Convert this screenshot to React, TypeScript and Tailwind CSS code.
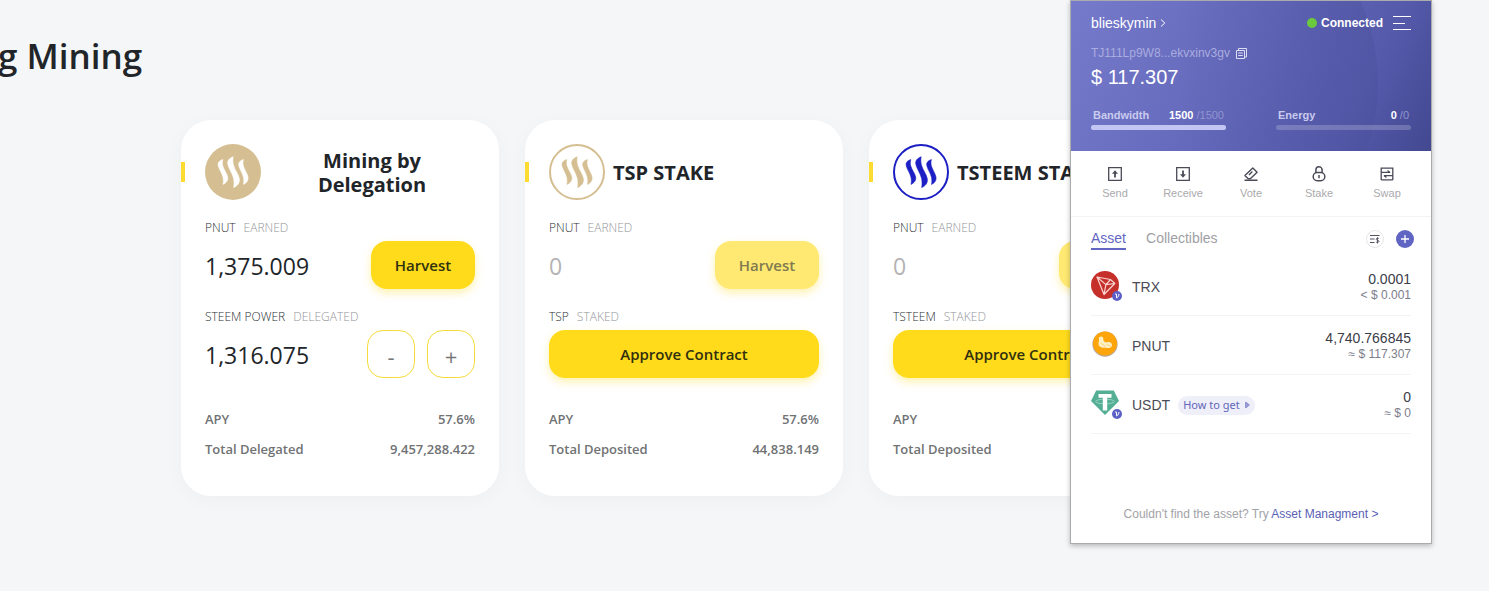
import type { ReactNode } from "react";
import { clsx } from "clsx";

const cards = [
  {
    title: "Mining by\nDelegation",
    logo: "solid",
    earned: "1,375.009",
    token: "STEEM POWER",
    action: "DELEGATED",
    amount: "1,316.075",
    apy: "57.6%",
    totalLabel: "Total Delegated",
    total: "9,457,288.422",
  },
  {
    title: "TSP STAKE",
    logo: "gold",
    earned: "0",
    token: "TSP",
    action: "STAKED",
    apy: "57.6%",
    totalLabel: "Total Deposited",
    total: "44,838.149",
  },
  {
    title: "TSTEEM STAKE",
    logo: "blue",
    earned: "0",
    token: "TSTEEM",
    action: "STAKED",
    apy: "57.6%",
    totalLabel: "Total Deposited",
    total: "12,204.518",
  },
];

const SteemLogo = ({ variant }: { variant: string }) => {
  const color = variant === "blue" ? "#1b1fc4" : "#d5bf92";
  const solid = variant === "solid";
  const wave = solid ? "#fff" : color;

  return (
    <svg className="h-14 w-14 shrink-0" viewBox="0 0 56 56" aria-hidden="true">
      <circle cx="28" cy="28" r={solid ? 28 : 27} fill={solid ? color : "#fff"} stroke={solid ? "none" : color} strokeWidth="2" />
      <g fill={wave} stroke={wave} strokeWidth=".6">
        <path d="M17.8 15.6C14.6 16.6 12.6 18.4 13.2 21.6C13.9 25.2 17 29 18 33.4C18.5 36 18.5 38.2 18 40.4C21.2 38.8 23.2 36.6 22.7 33.2C22.1 29.4 18.9 26.2 17.7 21.8C17.2 19.6 17.2 17.6 17.8 15.6Z" />
        <path d="M28.2 12.8C24.6 14.2 22.2 16.4 22.8 20C23.5 24.4 27.4 29 28.6 34.6C29.2 37.8 29.2 40.8 28.7 43.6C32.6 41.8 34.9 39 34.3 34.8C33.6 30.2 29.7 26.2 28.3 20.6C27.7 17.8 27.7 15.2 28.2 12.8Z" />
        <path d="M38.4 15.6C35.2 16.6 33.2 18.4 33.8 21.6C34.5 25.2 37.6 29 38.5 33.4C39 36 39 38.2 38.5 40.4C41.7 38.8 43.5 36.6 43 33.2C42.4 29.4 39.5 26.2 38.3 21.8C37.8 19.6 37.8 17.6 38.4 15.6Z" />
      </g>
    </svg>
  );
};

const Label = ({ name, note }: { name: string; note: string }) => (
  <p className="mt-[19px] mb-1 flex gap-2 text-[12px] leading-[18px] font-light text-[#2c3034]">
    <span>{name}</span>
    <span className="text-[#94969a]">{note}</span>
  </p>
);

const StepButton = ({ children, label }: { children: ReactNode; label: string }) => (
  <button aria-label={label} className="h-12 w-12 rounded-2xl border border-[#f5dc3c] pt-1 text-[22px] leading-6 text-[#777]">
    {children}
  </button>
);

const MiningCard = ({ card }: { card: (typeof cards)[number] }) => {
  const empty = card.earned === "0";

  return (
    <article className="flex-1 rounded-[30px] bg-white px-6 pt-6 pb-8 shadow-[0_4px_20px_rgba(0,0,0,0.03)]">
      <header className="-ml-6 flex items-center">
        <span className="mr-5 h-5 w-1 shrink-0 bg-[#fadc32]" />
        <SteemLogo variant={card.logo} />
        <h2
          className={clsx(
            "ml-2 pt-0.5 whitespace-pre text-[20px] leading-6 font-bold text-[#212529]",
            card.logo === "solid" && "flex-1 text-center"
          )}
        >
          {card.title}
        </h2>
      </header>

      <Label name="PNUT" note="EARNED" />
      <div className="flex h-12 items-center justify-between">
        <span className={clsx("pt-0.5 text-[23px]", empty ? "text-[#b3b3b3]" : "text-[#212529]")}>{card.earned}</span>
        <button
          disabled={empty}
          className="h-12 w-[104px] rounded-2xl bg-[#ffdb1c] text-[15px] font-semibold text-[#30300f] shadow-[0_4px_8px_rgba(255,219,28,0.35)] disabled:bg-[#ffe972] disabled:text-[#7f7a50]"
        >
          Harvest
        </button>
      </div>

      <Label name={card.token} note={card.action} />
      {card.amount ? (
        <div className="flex h-12 items-center gap-3">
          <span className="flex-1 pt-0.5 text-[23px] text-[#212529]">{card.amount}</span>
          <StepButton label="Decrease delegation">-</StepButton>
          <StepButton label="Increase delegation">+</StepButton>
        </div>
      ) : (
        <button className="h-12 w-full rounded-2xl bg-[#ffdb1c] text-[15px] font-semibold text-[#30300f] shadow-[0_4px_8px_rgba(255,219,28,0.35)]">
          Approve Contract
        </button>
      )}

      <dl className="mt-[26px] text-[13px] leading-[30px] font-semibold text-[#707274]">
        <div className="flex justify-between">
          <dt>APY</dt>
          <dd>{card.apy}</dd>
        </div>
        <div className="flex justify-between">
          <dt>{card.totalLabel}</dt>
          <dd>{card.total}</dd>
        </div>
      </dl>
    </article>
  );
};

const icon = "h-4 w-4";

const actions = [
  {
    name: "Send",
    svg: (
      <svg className={icon} viewBox="0 0 16 16" fill="none" stroke="#4a4b57" strokeWidth="1.3">
        <path d="M1.7 1.7h12.6v12.6H1.7z" />
        <path d="M8 11.5V6" strokeWidth="1.8" />
        <path d="M5 7.8L8 4.2l3 3.6z" fill="#4a4b57" stroke="none" />
      </svg>
    ),
  },
  {
    name: "Receive",
    svg: (
      <svg className={icon} viewBox="0 0 16 16" fill="none" stroke="#4a4b57" strokeWidth="1.3">
        <path d="M1.7 1.7h12.6v12.6H1.7z" />
        <path d="M8 4.5V10" strokeWidth="1.8" />
        <path d="M5 8.2L8 11.8l3-3.6z" fill="#4a4b57" stroke="none" />
      </svg>
    ),
  },
  {
    name: "Vote",
    svg: (
      <svg className={icon} viewBox="0 0 16 16" fill="none" stroke="#4a4b57" strokeWidth="1.4" strokeLinejoin="round">
        <path d="M9.8 1.9l4.3 4.3-6.8 6.5H5.2L1.9 9.4z" />
        <path d="M6 8.9l3.4-3.3M1.5 14.3h13" />
      </svg>
    ),
  },
  {
    name: "Stake",
    svg: (
      <svg className={icon} viewBox="0 0 16 16" fill="none" stroke="#4a4b57" strokeWidth="1.5">
        <path d="M4.9 6.7V3.9a3.1 3.1 0 0 1 6.2 0v2.8" />
        <rect x="2.2" y="6.5" width="11.6" height="8.2" rx="4" />
        <path d="M8 9v3.2" />
      </svg>
    ),
  },
  {
    name: "Swap",
    svg: (
      <svg className={icon} viewBox="0 0 16 16" fill="none" stroke="#4a4b57" strokeWidth="1.3">
        <path d="M2.2 14V2.2h11.6V14M2.2 13.8h11.6" />
        <path d="M2 6.4h9M5 9.7h9" />
        <path d="M8.6 3.8l3.2 2.6H8.6zM7.4 12.3L4.2 9.7h3.2z" fill="#4a4b57" stroke="none" />
      </svg>
    ),
  },
];

const Verified = () => (
  <svg className="absolute -right-[3px] -bottom-0.5 h-2.5 w-2.5" viewBox="0 0 10 10" aria-hidden="true">
    <circle cx="5" cy="5" r="5" fill="#5c60c6" />
    <path d="M3.1 3h1.3l.3 4M6.9 3c.2 1.6-.8 3-2.2 4" fill="none" stroke="#fff" strokeWidth="1" />
  </svg>
);

const assets = [
  {
    name: "TRX",
    amount: "0.0001",
    value: "< $ 0.001",
    verified: true,
    svg: (
      <svg className="h-7 w-7" viewBox="0 0 28 28" aria-hidden="true">
        <circle cx="14" cy="14" r="14" fill="#c5302b" />
        <path
          d="M6 6L19.5 8.5l4.3 4L13 23.5zM6 6l8.9 7.6L19.5 8.5M14.9 13.6l8.9-1.1M14.9 13.6L13 23.5"
          fill="none"
          stroke="#fbd5d0"
          strokeWidth="1.2"
          strokeLinejoin="round"
        />
      </svg>
    ),
  },
  {
    name: "PNUT",
    amount: "4,740.766845",
    value: "≈ $ 117.307",
    svg: (
      <svg className="h-7 w-7" viewBox="0 0 28 28" aria-hidden="true">
        <circle cx="14" cy="14.2" r="12.6" fill="#b9a89a" />
        <circle cx="14" cy="13.4" r="12" fill="#fda50a" />
        <path
          d="M8.5 7c1.7-1.3 3.8-.4 3.8 1.7 0 1.7.5 2.8 1.7 3.3 1.4.6 2.7-.5 4.4.1 2.9 1 3.6 4.2 1.2 5.4-2.1 1-4.8.3-7 .3-2.7 0-4.9-1.2-5.1-3.7-.1-1.8.7-2.4.5-4-.2-1.3-.3-2.3.5-3.1z"
          fill="#fff0c4"
        />
        <path d="M9.5 13l5 3.5M15.5 14.5l4 1.5" stroke="#f6c561" strokeWidth=".7" />
      </svg>
    ),
  },
  {
    name: "USDT",
    amount: "0",
    value: "≈ $ 0",
    verified: true,
    help: true,
    svg: (
      <svg className="h-7 w-7" viewBox="0 0 28 28" aria-hidden="true">
        <path d="M5.2 1.5h17.6L28 12 14 26 0 12z" fill="#53ae94" />
        <ellipse cx="14" cy="12.5" rx="9.3" ry="2.3" fill="none" stroke="#a9dccd" strokeWidth=".8" />
        <path d="M7.5 5h13v3.8h-4.3V21.5h-4.4V8.8H7.5z" fill="#fff" />
      </svg>
    ),
  },
];

const Resource = ({ name, used, limit, percent }: { name: string; used: number; limit: number; percent: number }) => (
  <div className="w-[135px]">
    <div className="flex justify-between px-0.5 text-[11px] leading-4 font-bold">
      <span className="text-[#c9cbee]">{name}</span>
      <span className="text-white">
        {used} <span className="font-normal text-[#9194cf]">/{limit}</span>
      </span>
    </div>
    <div className="mt-0.5 h-[5px] rounded-full bg-white/20">
      <div className="h-full rounded-full bg-[#c3c6f2]" style={{ width: `${percent}%` }} />
    </div>
  </div>
);

const Wallet = () => (
  <aside className="absolute top-0 right-[57px] w-[362px] border border-[#a9abad] bg-white font-['Liberation_Sans',Arial,sans-serif] shadow-[0_2px_5px_rgba(0,0,0,0.25)]">
    <section className="relative overflow-hidden bg-linear-[115deg,#757acb,#6267b9_50%,#555aab_78%,#434891] px-5 pt-3 pb-[21px] text-white">
      <span className="absolute -top-[118px] -left-[93px] h-[400px] w-[400px] rounded-full bg-linear-to-r from-transparent from-50% to-[#4b509c]/45" />
      <div className="relative">
        <div className="flex items-center leading-5">
          <button className="flex items-center gap-1 text-[14px]">
            blieskymin
            <svg className="h-2 w-1.5" viewBox="0 0 6 8" fill="none" stroke="#fff" strokeWidth="1">
              <path d="M1 .5L4.8 4 1 7.5" />
            </svg>
          </button>
          <span className="mr-1 ml-auto h-2.5 w-2.5 rounded-full bg-[#6bc93d]" />
          <span className="mr-2.5 text-[12px] font-bold">Connected</span>
          <button aria-label="Menu">
            <svg className="h-3.5 w-[18px]" viewBox="0 0 18 14" stroke="#fff" strokeWidth="1">
              <path d="M0 .5h18M0 7.5h12M0 13.5h18" />
            </svg>
          </button>
        </div>
        <div className="mt-3 flex items-center gap-1.5 text-[12px] leading-4 text-[#a9acdf]">
          TJ111Lp9W8...ekvxinv3gv
          <button aria-label="Copy address">
            <svg className="h-[11px] w-[11px]" viewBox="0 0 11 11" fill="none" stroke="#dcdef5">
              <path d="M2.5 2V.5h8V9H9M.5 2.5h8v8h-8zM2.2 5h4.6M2.2 7.5h4.6" />
            </svg>
          </button>
        </div>
        <p className="mt-1 text-[20px] leading-6">$ 117.307</p>
        <div className="mt-[18px] flex justify-between">
          <Resource name="Bandwidth" used={1500} limit={1500} percent={100} />
          <Resource name="Energy" used={0} limit={0} percent={0} />
        </div>
      </div>
    </section>

    <nav className="grid grid-cols-5 border-b border-[#f3f3f5] px-2.5 pt-[15px] pb-[15px] text-[11px] leading-4 text-[#aaaaad]">
      {actions.map((action) => (
        <button key={action.name} className="flex flex-col items-center gap-[3px]">
          {action.svg}
          {action.name}
        </button>
      ))}
    </nav>

    <div className="flex items-center pt-[11px] pr-[17px] pl-5 text-[14px] leading-5">
      <button className="border-b-2 border-[#6266c3] text-[#6266c3]">Asset</button>
      <button className="ml-5 border-b-2 border-transparent text-[#a0a0a4]">Collectibles</button>
      <button aria-label="Sort assets" className="ml-auto">
        <svg className="h-[18px] w-[18px]" viewBox="0 0 18 18" fill="none" stroke="#515260">
          <circle cx="9" cy="9" r="8.5" stroke="#e6e6e9" />
          <path d="M4 5.5h9.5M4 9h4.5M4 12.5h4.5" strokeWidth="1.2" />
          <path d="M13 8.6c-.7-.7-2.9-.6-2.9.6 0 1.3 2.9.7 2.9 2.1 0 1.3-2.3 1.3-3.1.5M11.5 7.2v6.3" strokeWidth=".9" />
        </svg>
      </button>
      <button aria-label="Add asset" className="ml-3">
        <svg className="h-[18px] w-[18px]" viewBox="0 0 18 18">
          <circle cx="9" cy="9" r="9" fill="#6065c4" />
          <path d="M9 5v8M5 9h8" stroke="#fff" strokeWidth="1.3" />
        </svg>
      </button>
    </div>

    <ul className="mx-5 mt-[7px]">
      {assets.map((asset) => (
        <li key={asset.name} className="flex h-[59px] items-center border-b border-[#f3f3f5]">
          <span className="relative mr-[13px] mb-0.5">
            {asset.svg}
            {asset.verified && <Verified />}
          </span>
          <span className="pt-0.5 text-[14px] text-[#4a4b55]">{asset.name}</span>
          {asset.help && (
            <button className="mt-0.5 ml-2 flex h-[19px] items-center gap-[5px] rounded-full bg-[#efeffa] px-[5px] font-['Noto_Sans',sans-serif] text-[11px] text-[#6266b8]">
              How to get
              <svg className="h-1.5 w-[5px]" viewBox="0 0 5 6">
                <path d="M0 0h1.5L5 3 1.5 6H0z" fill="#9497d2" />
              </svg>
            </button>
          )}
          <span className="ml-auto pt-0.5 text-right text-[14px] leading-4 text-[#3c3d48]">
            {asset.amount}
            <span className="block text-[12px] leading-4 text-[#7c7d8c]">{asset.value}</span>
          </span>
        </li>
      ))}
    </ul>

    <p className="pt-[71px] pb-5 text-center text-[12px] leading-[18px] text-[#a2a2a6]">
      Couldn't find the asset? Try{" "}
      <a href="#assets" className="text-[#5a5eb5]">
        Asset Managment &gt;
      </a>
    </p>
  </aside>
);

export default function App() {
  return (
    <div className="relative min-h-screen overflow-hidden bg-[#f5f6f8] font-['Open_Sans','Noto_Sans',sans-serif]">
      <main className="pt-8">
        <h1 className="-ml-0.5 text-[35px] leading-12 font-semibold text-[#212529]">g Mining</h1>
        <div className="mt-10 ml-[181px] flex max-w-[1006px] items-start gap-[26px]">
          {cards.map((card) => (
            <MiningCard key={card.title} card={card} />
          ))}
        </div>
      </main>
      <Wallet />
    </div>
  );
}
